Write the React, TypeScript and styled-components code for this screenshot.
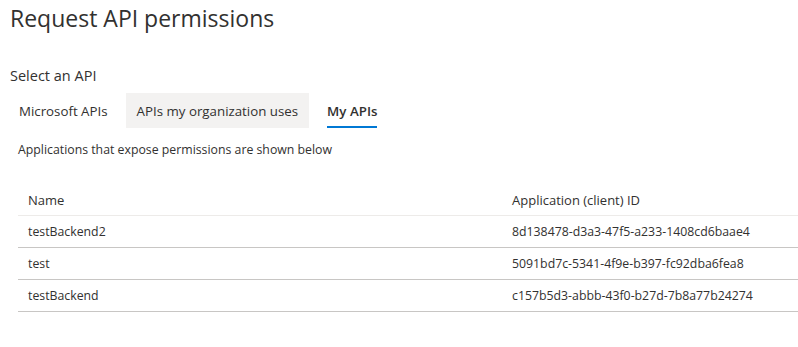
import styled, { createGlobalStyle } from 'styled-components';

const GlobalStyle = createGlobalStyle`
  body {
    margin: 0;
    background: #ffffff;
    font-family: 'Open Sans', 'Noto Sans', sans-serif;
    color: #323130;
  }
`;

const Page = styled.div`
  padding: 2px 0 0 10px;
  width: 788px;
`;

const Title = styled.h1`
  margin: 0;
  font-size: 23px;
  line-height: 32px;
  font-weight: 400;
  color: #323130;
`;

const SectionLabel = styled.div`
  margin-top: 32px;
  font-size: 14.5px;
  line-height: 20px;
`;

const TabBar = styled.div`
  display: flex;
  margin: 7px 0 0 -2px;
`;

const Tab = styled.button<{ $active?: boolean; $hover?: boolean }>`
  all: unset;
  position: relative;
  height: 35px;
  padding: 0 11px;
  margin-right: 7px;
  display: flex;
  align-items: center;
  font-size: 13.3px;
  font-weight: ${(p) => (p.$active ? 600 : 400)};
  color: #323130;
  background: ${(p) => (p.$hover ? '#f3f2f1' : 'transparent')};
  cursor: pointer;

  &::after {
    content: '';
    position: absolute;
    left: 11px;
    right: 11px;
    bottom: 0;
    height: 2px;
    background: ${(p) => (p.$active ? '#0078d4' : 'transparent')};
  }
`;

const Content = styled.div`
  padding-left: 8px;
`;

const Hint = styled.div`
  margin-top: 14px;
  font-size: 12.3px;
  line-height: 16px;
`;

const Table = styled.div`
  margin-top: 26px;
`;

const Row = styled.div<{ $header?: boolean }>`
  display: grid;
  grid-template-columns: 484px 1fr;
  height: 31px;
  align-items: center;
  border-bottom: 1px solid ${(p) => (p.$header ? '#edebe9' : '#c8c6c4')};
  font-size: ${(p) => (p.$header ? '13px' : '12.3px')};
  color: #323130;
`;

const Cell = styled.div`
  padding-left: 10px;
  white-space: nowrap;
`;

const apps = [
  { name: 'testBackend2', id: '8d138478-d3a3-47f5-a233-1408cd6baae4' },
  { name: 'test', id: '5091bd7c-5341-4f9e-b397-fc92dba6fea8' },
  { name: 'testBackend', id: 'c157b5d3-abbb-43f0-b27d-7b8a77b24274' },
];

export default function App() {
  return (
    <>
      <GlobalStyle />
      <Page>
        <Title>Request API permissions</Title>
        <SectionLabel>Select an API</SectionLabel>
        <TabBar>
          <Tab>Microsoft APIs</Tab>
          <Tab $hover>APIs my organization uses</Tab>
          <Tab $active>My APIs</Tab>
        </TabBar>
        <Content>
          <Hint>Applications that expose permissions are shown below</Hint>
          <Table>
            <Row $header>
              <Cell>Name</Cell>
              <Cell>Application (client) ID</Cell>
            </Row>
            {apps.map((a) => (
              <Row key={a.id}>
                <Cell>{a.name}</Cell>
                <Cell>{a.id}</Cell>
              </Row>
            ))}
          </Table>
        </Content>
      </Page>
    </>
  );
}
